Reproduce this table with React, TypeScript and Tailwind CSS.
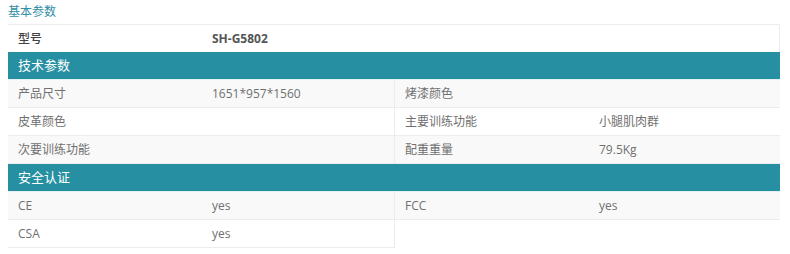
import React from 'react';

type Cell = [string, string];

const techRows: [Cell, Cell][] = [
  [['产品尺寸', '1651*957*1560'], ['烤漆颜色', '']],
  [['皮革颜色', ''], ['主要训练功能', '小腿肌肉群']],
  [['次要训练功能', ''], ['配重重量', '79.5Kg']],
];

const certRows: Cell[][] = [
  [['CE', 'yes'], ['FCC', 'yes']],
  [['CSA', 'yes']],
];

const font = { fontFamily: '"Open Sans", "Noto Sans CJK SC", sans-serif' };

const SectionHead: React.FC<{ title: string }> = ({ title }) => (
  <div className="h-[28px] bg-[#268fa2] text-white text-[13px] flex items-center px-[10px] border-b border-[#e3f0f3]">
    {title}
  </div>
);

const PairRow: React.FC<{ cells: Cell[]; striped: boolean }> = ({ cells, striped }) => (
  <div className="grid grid-cols-[387px_1fr] h-[28px]">
    {cells.map(([label, value], i) => (
      <div
        key={label}
        className={`grid grid-cols-[194px_1fr] items-center border-b border-[#ececec] ${i === 0 ? 'border-r' : ''} ${
          striped ? 'bg-[#f9f9f9]' : 'bg-white'
        }`}
      >
        <span className="px-[10px]">{label}</span>
        <span className="px-[10px]">{value}</span>
      </div>
    ))}
  </div>
);

export default function App() {
  return (
    <div className="w-[790px] h-[254px] bg-white text-[12px] text-[#707070]" style={font}>
      <div className="h-[24px] flex items-center px-[8px] text-[#2f8ea4]">基本参数</div>
      <div className="ml-[8px] w-[772px]">
        <div className="grid grid-cols-[194px_1fr] items-center h-[28px] border-t border-r border-[#ececec] text-[#444]">
          <span className="px-[10px] font-medium">型号</span>
          <span className="px-[10px] font-bold text-[#555]">SH-G5802</span>
        </div>
        <SectionHead title="技术参数" />
        {techRows.map((r, i) => (
          <PairRow key={i} cells={r} striped={i % 2 === 0} />
        ))}
        <SectionHead title="安全认证" />
        {certRows.map((r, i) => (
          <PairRow key={i} cells={r} striped={i % 2 === 0} />
        ))}
      </div>
    </div>
  );
}
